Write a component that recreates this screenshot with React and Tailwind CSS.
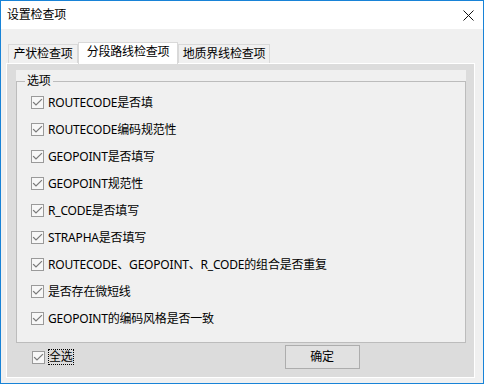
const items = [
  "ROUTECODE是否填",
  "ROUTECODE编码规范性",
  "GEOPOINT是否填写",
  "GEOPOINT规范性",
  "R_CODE是否填写",
  "STRAPHA是否填写",
  "ROUTECODE、GEOPOINT、R_CODE的组合是否重复",
  "是否存在微短线",
  "GEOPOINT的编码风格是否一致",
];

const tabs = [
  { label: "产状检查项", width: "w-[70px]" },
  { label: "分段路线检查项", width: "w-[100px]", active: true },
  { label: "地质界线检查项", width: "w-[92px]" },
];

function CheckBox() {
  return (
    <span className="w-[13px] h-[13px] shrink-0 border border-[#9a9a9a] bg-[#f7f7f7] flex items-center justify-center">
      <svg width="11" height="11" viewBox="0 0 11 11" fill="none" aria-hidden="true">
        <polyline
          points="1.5,5.5 4,8 9.5,2.5"
          stroke="#7a7a7a"
          strokeWidth="1.2"
          strokeLinecap="square"
        />
      </svg>
    </span>
  );
}

export default function App() {
  return (
    <div
      className="w-[484px] h-[384px] border border-[#1883d7] bg-[#f0f0f0] flex flex-col text-[12px] leading-[16px] tracking-[-0.2px] text-black [text-autospace:no-autospace]"
      style={{ fontFamily: '"Noto Sans", "Noto Sans CJK SC", sans-serif' }}
    >
      {/* title bar */}
      <div className="h-[28px] bg-white flex items-center justify-between pl-[6px] pr-[9px] shrink-0">
        <span>设置检查项</span>
        <svg width="11" height="11" viewBox="0 0 11 11" aria-hidden="true">
          <path d="M0.5 0.5 L10.5 10.5 M10.5 0.5 L0.5 10.5" stroke="#111" strokeWidth="1" />
        </svg>
      </div>

      {/* tabs */}
      <div className="mt-[13px] ml-[7px] h-[21px] flex items-end shrink-0">
        {tabs.map((t) =>
          t.active ? (
            <div
              key={t.label}
              className={`${t.width} h-[22px] -mb-[1px] relative z-10 bg-white border border-b-0 border-[#d9d9d9] flex items-center justify-center pb-[3px]`}
            >
              {t.label}
            </div>
          ) : (
            <div
              key={t.label}
              className={`${t.width} h-[19px] bg-[#f0f0f0] border border-b-0 border-[#d9d9d9] flex items-center justify-center`}
            >
              {t.label}
            </div>
          )
        )}
      </div>

      {/* tab page */}
      <div className="ml-[5px] w-[469px] h-[315px] border border-white bg-[#dcdcdc] pt-[6px] pl-[9px] pr-[8px] shrink-0">
        <div className="bg-[#f0f0f0] pt-[11px]">
          <div className="relative border border-[#bcbcbc] h-[262px] pt-[7px] pl-[14px]">
            <span className="absolute top-[-9px] left-[8px] px-[2px] bg-[#f0f0f0]">选项</span>
            {items.map((item) => (
              <div key={item} className="h-[27px] flex items-center gap-[4px]">
                <CheckBox />
                <span>{item}</span>
              </div>
            ))}
          </div>
        </div>

        <div className="mt-[2px] h-[24px] flex items-center">
          <div className="ml-[16px] flex items-center">
            <CheckBox />
            <span className="ml-[3px] h-[16px] px-[0px] border border-dotted border-black flex items-center leading-[14px]">
              全选
            </span>
          </div>
          <button className="ml-[211px] w-[75px] h-[24px] bg-[#e1e1e1] border border-[#adadad] flex items-center justify-center">
            确定
          </button>
        </div>
      </div>
    </div>
  );
}
